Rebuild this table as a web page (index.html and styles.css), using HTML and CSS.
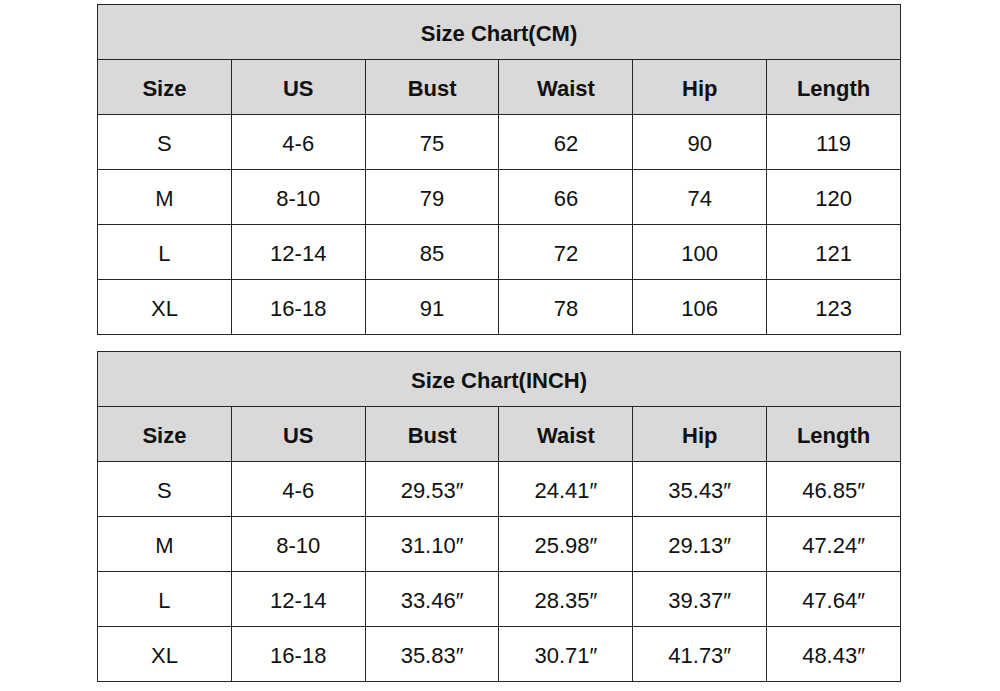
FILE: index.html
```html
<!DOCTYPE html>
<html>
<head>
<meta charset="utf-8">
<link rel="stylesheet" href="styles.css">
</head>
<body>
<div class="page">
<table class="chart">
<tr><th class="title" colspan="6">Size Chart(CM)</th></tr>
<tr class="head"><th>Size</th><th>US</th><th>Bust</th><th>Waist</th><th>Hip</th><th>Length</th></tr>
<tr><td>S</td><td>4-6</td><td>75</td><td>62</td><td>90</td><td>119</td></tr>
<tr><td>M</td><td>8-10</td><td>79</td><td>66</td><td>74</td><td>120</td></tr>
<tr><td>L</td><td>12-14</td><td>85</td><td>72</td><td>100</td><td>121</td></tr>
<tr><td>XL</td><td>16-18</td><td>91</td><td>78</td><td>106</td><td>123</td></tr>
</table>
<table class="chart">
<tr><th class="title" colspan="6">Size Chart(INCH)</th></tr>
<tr class="head"><th>Size</th><th>US</th><th>Bust</th><th>Waist</th><th>Hip</th><th>Length</th></tr>
<tr><td>S</td><td>4-6</td><td>29.53″</td><td>24.41″</td><td>35.43″</td><td>46.85″</td></tr>
<tr><td>M</td><td>8-10</td><td>31.10″</td><td>25.98″</td><td>29.13″</td><td>47.24″</td></tr>
<tr><td>L</td><td>12-14</td><td>33.46″</td><td>28.35″</td><td>39.37″</td><td>47.64″</td></tr>
<tr><td>XL</td><td>16-18</td><td>35.83″</td><td>30.71″</td><td>41.73″</td><td>48.43″</td></tr>
</table>
</div>
</body>
</html>
```
FILE: styles.css
```css
html, body {
  margin: 0;
  padding: 0;
  background: #fff;
}
.page {
  padding: 4px 0 0 97px;
  display: flex;
  flex-direction: column;
  gap: 16px;
  font-family: "Liberation Sans", Arial, sans-serif;
}
.chart {
  border-collapse: collapse;
  table-layout: fixed;
  width: 804px;
  color: #111;
}
.chart th, .chart td {
  border: 1px solid #262626;
  height: 55px;
  padding: 3px 0 0 0;
  text-align: center;
  vertical-align: middle;
  font-size: 22px;
  box-sizing: border-box;
}
.chart th {
  background: #d9d9d9;
  font-weight: bold;
}
```
